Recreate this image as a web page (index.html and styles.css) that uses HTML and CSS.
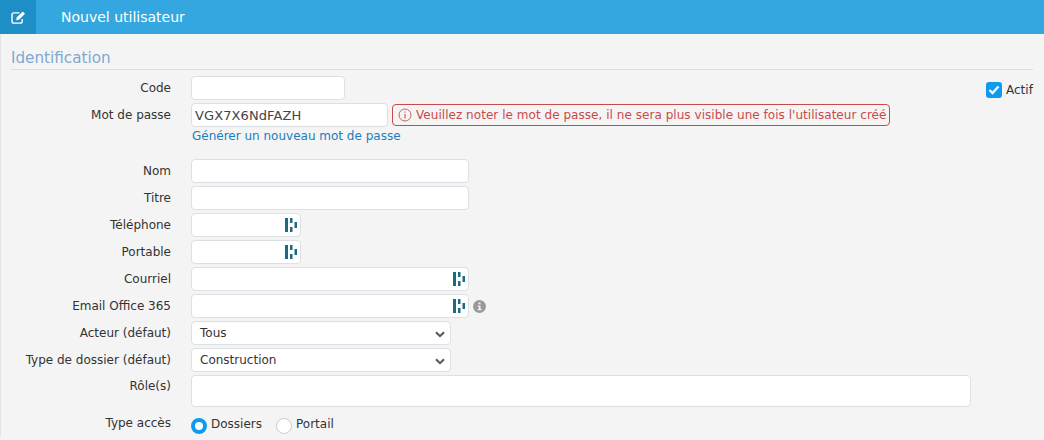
FILE: index.html
```html
<!DOCTYPE html>
<html lang="fr">
<head>
<meta charset="utf-8">
<title>Nouvel utilisateur</title>
<link rel="stylesheet" href="styles.css">
</head>
<body>
<header class="head">
  <div class="head-icon">
    <svg width="15" height="13" viewBox="0 0 16 14"><path d="M12 8.500V11a2 2 0 0 1-2 2H3a2 2 0 0 1-2-2V4a2 2 0 0 1 2-2h6" fill="none" stroke="#fff" stroke-width="1.500"/><path d="M6 7l6.500-6.500 2.500 2.500L8.500 9.500 5.500 10z" fill="#fff"/></svg>
  </div>
  <h1 class="head-title">Nouvel utilisateur</h1>
</header>
<main class="panel">
  <h2 class="section">Identification</h2>
  <label class="actif"><span class="check"><svg width="12" height="10" viewBox="0 0 12 10"><path d="M1.500 5l3 3 6-6.500" fill="none" stroke="#fff" stroke-width="2.400"/></svg></span>Actif</label>
  <div class="form">
    <div class="row"><span class="lab">Code</span><span class="inp w-code"></span></div>
    <div class="row"><span class="lab">Mot de passe</span><span class="inp w-pass mono">VGX7X6NdFAZH</span>
      <span class="alert"><svg width="14" height="14" viewBox="0 0 14 14"><circle cx="7" cy="7" r="6" fill="none" stroke="#c9635f" stroke-width="1"/><path d="M7 3.500v1.200M7 6v4.500" stroke="#c9635f" stroke-width="1.200"/></svg>Veuillez noter le mot de passe, il ne sera plus visible une fois l'utilisateur créé</span></div>
    <div class="row-link"><a class="link">Générer un nouveau mot de passe</a></div>
    <div class="row"><span class="lab">Nom</span><span class="inp w-long"></span></div>
    <div class="row"><span class="lab">Titre</span><span class="inp w-long"></span></div>
    <div class="row"><span class="lab">Téléphone</span><span class="inp w-tel"><svg class="dash" width="12" height="16" viewBox="0 0 12 16"><path d="M0 1h3v14H0zM5 1h2.500v5H5zM5 10h2.500v5H5zM9.500 5H12v6H9.500z" fill="#1b6a80"/></svg></span></div>
    <div class="row"><span class="lab">Portable</span><span class="inp w-tel"><svg class="dash" width="12" height="16" viewBox="0 0 12 16"><path d="M0 1h3v14H0zM5 1h2.500v5H5zM5 10h2.500v5H5zM9.500 5H12v6H9.500z" fill="#1b6a80"/></svg></span></div>
    <div class="row"><span class="lab">Courriel</span><span class="inp w-long"><svg class="dash" width="12" height="16" viewBox="0 0 12 16"><path d="M0 1h3v14H0zM5 1h2.500v5H5zM5 10h2.500v5H5zM9.500 5H12v6H9.500z" fill="#1b6a80"/></svg></span></div>
    <div class="row"><span class="lab">Email Office 365</span><span class="inp w-long"><svg class="dash" width="12" height="16" viewBox="0 0 12 16"><path d="M0 1h3v14H0zM5 1h2.500v5H5zM5 10h2.500v5H5zM9.500 5H12v6H9.500z" fill="#1b6a80"/></svg></span>
      <svg class="info" width="13" height="13" viewBox="0 0 13 13"><circle cx="6.500" cy="6.500" r="6.500" fill="#999"/><path d="M5.500 2.500h2v1.800h-2zM4.800 5.500h2.700v3.500h1v1.300H4.800V9h1V6.800h-1z" fill="#f4f4f4"/></svg></div>
    <div class="row"><span class="lab">Acteur (défaut)</span><span class="inp w-sel sel">Tous<svg class="chev" width="10" height="7" viewBox="0 0 10 7"><path d="M1 1.200l4 4 4-4" fill="none" stroke="#555" stroke-width="2"/></svg></span></div>
    <div class="row"><span class="lab">Type de dossier (défaut)</span><span class="inp w-sel sel">Construction<svg class="chev" width="10" height="7" viewBox="0 0 10 7"><path d="M1 1.200l4 4 4-4" fill="none" stroke="#555" stroke-width="2"/></svg></span></div>
    <div class="row row-role"><span class="lab">Rôle(s)</span><span class="inp w-role"></span></div>
    <div class="row row-acces"><span class="lab lab-acces">Type accès</span>
      <span class="radios"><span class="radio on"></span><span class="rlab">Dossiers</span><span class="radio off"></span><span class="rlab">Portail</span></span></div>
  </div>
</main>
</body>
</html>
```
FILE: styles.css
```css
* { box-sizing: border-box; }
html, body { margin: 0; height: 100%; overflow: hidden; }
body { font-family: "DejaVu Sans", sans-serif; font-size: 12px; color: #333; background: #f4f4f4; }
.head { height: 34px; background: #35a7e0; display: flex; align-items: center; }
.head-icon { width: 36px; height: 34px; background: #1e8ec6; display: flex; align-items: center; justify-content: center; }
.head-title { margin: 0 0 0 25px; font-size: 14px; font-weight: normal; color: #fff; }
.panel { position: relative; padding: 14px 11px 0 10px; border-left: 1px solid #e4e4e4; }
.section { margin: 0; height: 22px; font-size: 15.200px; line-height: 20px; font-weight: normal; color: #7fa8cf; border-bottom: 1px solid #ddd; }
.actif { position: absolute; left: 985px; top: 48px; display: flex; align-items: center; gap: 4px; }
.check { width: 16px; height: 16px; border-radius: 3px; background: #0d9bf0; display: flex; align-items: center; justify-content: center; }
.form { margin-top: 6px; }
.row { display: flex; align-items: center; height: 24px; margin-bottom: 3px; }
.lab { width: 160px; margin-right: 20px; text-align: right; flex: none; }
.inp { display: flex; align-items: center; height: 24px; background: #fff; border: 1px solid #dcdfe3; border-radius: 4px; position: relative; flex: none; }
.w-code { width: 154px; }
.w-pass { width: 197px; }
.w-long { width: 278px; }
.w-tel { width: 110px; }
.w-sel { width: 260px; }
.w-role { width: 780px; height: 32px; }
.mono { padding-left: 3px; font-size: 13px; letter-spacing: .1px; color: #444; }
.sel { padding-left: 8px; }
.chev { position: absolute; right: 5px; top: 9px; }
.dash { position: absolute; right: 3px; top: 3px; }
.info { margin-left: 4px; }
.alert { margin-left: 4px; height: 22px; display: flex; align-items: center; gap: 4px; padding: 0 3px 0 5px; border: 1px solid #c9494a; border-radius: 4px; color: #c9494a; letter-spacing: .04px; }
.row-link { padding-left: 181px; height: 32px; padding-top: 2px; line-height: 15px; margin-top: -3px; }
.link { color: #1b7cc0; }
.row-role { align-items: flex-start; height: 32px; margin-bottom: 0; }
.row-role .lab { padding-top: 4px; }
.row-acces { margin-top: 5px; }
.lab-acces { margin-top: -2px; }
.radios { display: flex; align-items: center; }
.radio { width: 16px; height: 16px; border-radius: 50%; background: #fff; }
.radio.on { border: 4px solid #0d9bf0; margin-top: 3px; }
.radio.off { border: 1px solid #ccc; margin-top: 3px; }
.rlab { margin: 0 14px 0 4px; }
```
